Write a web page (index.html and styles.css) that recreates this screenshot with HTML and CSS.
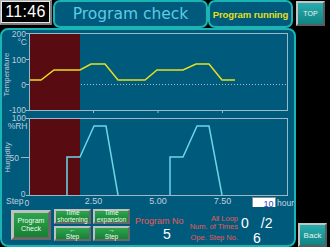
FILE: index.html
```html
<!DOCTYPE html>
<html>
<head>
<meta charset="utf-8">
<link rel="stylesheet" href="styles.css">
</head>
<body>
<div class="screen">
  <div class="top">
    <div class="clock"><div class="clock-face">11:46</div></div>
    <div class="title">Program check</div>
    <div class="status">Program running</div>
    <div class="tbtn top-btn">TOP</div>
  </div>
  <div class="main">
    <div class="panel">
      <svg class="chart" width="292" height="177" viewBox="2 30 292 177">
        <rect class="band" x="30" y="34" width="50" height="76"/>
        <rect class="band" x="30" y="119" width="50" height="76"/>
        <rect class="frame" x="29.5" y="33.5" width="258" height="77"/>
        <rect class="frame" x="29.5" y="118.5" width="258" height="77"/>
        <path class="tick" d="M26 33.5H29M26 59.5H29M26 84.5H29M26 110.5H29M26 118.5H29M21 157.5H29M26 195.5H29M93.5 111V113M158 111V113M222.5 111V113"/>
        <line class="dots" x1="81" y1="84.5" x2="287" y2="84.5"/>
        <polyline class="temp" points="30,80 41,80 54,70 80,70 91,64 105,64 118,80 145,80 157,70 183,70 196,64 209,64 222,80 235,80"/>
        <polyline class="hum" points="67,195 67,157 80,157 94,126 106,126 118,195"/>
        <polyline class="hum" points="170,195 170,157 183,157 197,126 209,126 222,195"/>
        <g class="ax">
          <text x="26" y="37">200</text>
          <text x="27" y="44.5">°C</text>
          <text x="26" y="62.5">100</text>
          <text x="26" y="87.5">0</text>
          <text x="26" y="113">-100</text>
          <text x="26" y="121">100</text>
          <text x="27.5" y="129">%RH</text>
          <text x="19" y="160.5">50</text>
          <text x="25.5" y="196.5">0</text>
        </g>
        <text class="vlabel" transform="translate(9,74.5) rotate(-90)">Temperature</text>
        <text class="vlabel" transform="translate(10,157.5) rotate(-90)">Humidity</text>
        <g class="xl">
          <text x="93.5" y="203.5">2.50</text>
          <text x="158" y="203.5">5.00</text>
          <text x="222.5" y="203.5">7.50</text>
        </g>
        <text class="step" x="6" y="204">Step</text>
        <text class="step" x="24.5" y="205.5">0</text>
        <rect class="inbox" x="252.5" y="197.5" width="23" height="11"/>
        <text class="inval" x="273.5" y="206.5">10</text>
        <text class="hour" x="277" y="205.5">hour</text>
      </svg>
      <div class="controls">
        <div class="gbtn big">Program<br>Check</div>
        <div class="grid4">
          <div class="gbtn">Time<br>shortening</div>
          <div class="gbtn">Time<br>expansion</div>
          <div class="gbtn">←<br>Step</div>
          <div class="gbtn">→<br>Step</div>
        </div>
        <div class="progno">
          <div class="lbl pn">Program No</div>
          <div class="val pv">5</div>
        </div>
        <div class="counts">
          <div class="lbl two">All Loop<br>Num. of Times</div>
          <div class="val loops"><span class="v0">0</span><span class="v2">/2</span></div>
          <div class="lbl one">Ope. Step No.</div>
          <div class="val stepno">6</div>
        </div>
      </div>
    </div>
    <div class="side">
      <div class="tbtn back">Back</div>
    </div>
  </div>
</div>
</body>
</html>
```

FILE: styles.css
```css
html, body {
  margin: 0;
  padding: 0;
  background: #000;
}
body {
  font-family: "Liberation Sans", Arial, sans-serif;
}
.screen {
  width: 330px;
  height: 247px;
  overflow: hidden;
  background: #000;
}
.top {
  display: flex;
  height: 28px;
  align-items: flex-start;
}
.clock {
  box-sizing: border-box;
  width: 52px;
  height: 25px;
  border-style: solid;
  border-width: 1px 2px 2px 1px;
  border-color: #b4b4b4 #7c7c7c #7c7c7c #b4b4b4;
  background: #000;
}
.clock-face {
  box-sizing: border-box;
  height: 100%;
  border: 1px solid #e6e6e6;
  color: #fff;
  font-size: 16px;
  line-height: 20px;
  text-align: center;
  letter-spacing: 0.3px;
}
.title, .status {
  box-sizing: border-box;
  height: 28px;
  border: 2px solid #1ab4b4;
  border-radius: 7px;
  background: #005a7c;
  display: flex;
  align-items: center;
  justify-content: center;
  white-space: nowrap;
}
.title {
  margin-left: 1px;
  width: 155px;
  font-family: "DejaVu Sans", sans-serif;
  font-size: 15.5px;
  color: #5ccce4;
}
.status {
  width: 85px;
  font-size: 9.5px;
  font-weight: bold;
  color: #e4e020;
  letter-spacing: -0.1px;
}
.tbtn {
  box-sizing: border-box;
  border-style: solid;
  border-width: 2px;
  border-color: #c4c4c4 #5c5c5c #5c5c5c #c4c4c4;
  background: linear-gradient(#2aacac, #0f8484);
  color: #e8f4f4;
  display: flex;
  align-items: center;
  justify-content: center;
}
.top-btn {
  margin-left: 3px;
  margin-top: 1px;
  width: 29px;
  height: 25px;
  font-size: 7px;
}
.main {
  display: flex;
  height: 219px;
}
.panel {
  box-sizing: border-box;
  width: 296px;
  height: 219px;
  border: 2px solid #1ab4b4;
  border-radius: 8px;
  background: #005a7c;
  display: flex;
  flex-direction: column;
  overflow: hidden;
}
.chart {
  display: block;
  flex: none;
}
.band { fill: #580c12; }
.frame { fill: none; stroke: #9cb8c8; stroke-width: 1; }
.tick { fill: none; stroke: #9cb8c8; stroke-width: 1; }
.dots { stroke: #a8c0d0; stroke-width: 1; stroke-dasharray: 1 2; }
.temp { fill: none; stroke: #e6e020; stroke-width: 1.5; }
.hum { fill: none; stroke: #6cd6e6; stroke-width: 1.5; }
.ax text {
  font-family: "Liberation Sans", Arial, sans-serif;
  font-size: 8.5px;
  fill: #bccbd8;
  text-anchor: end;
}
.vlabel {
  font-family: "Liberation Sans", Arial, sans-serif;
  font-size: 7.8px;
  fill: #bccbd8;
  text-anchor: middle;
}
.xl text {
  font-family: "Liberation Sans", Arial, sans-serif;
  font-size: 9px;
  fill: #c0d0dc;
  text-anchor: middle;
}
.step {
  font-family: "Liberation Sans", Arial, sans-serif;
  font-size: 8.5px;
  fill: #c0d0dc;
}
.inbox { fill: #fff; stroke: #8c8c8c; stroke-width: 1; }
.inval {
  font-family: "Liberation Sans", Arial, sans-serif;
  font-size: 9px;
  fill: #2a48c0;
  text-anchor: end;
}
.hour {
  font-family: "Liberation Sans", Arial, sans-serif;
  font-size: 8.5px;
  fill: #c8d8e0;
}
.controls {
  display: flex;
  align-items: flex-start;
  height: 38px;
}
.gbtn {
  box-sizing: border-box;
  border-style: solid;
  border-width: 2px;
  border-color: #c0c0c0 #686868 #686868 #c0c0c0;
  background: linear-gradient(#2ea44e, #178034);
  color: #f0fff0;
  font-size: 6.5px;
  line-height: 6.5px;
  text-align: center;
  display: flex;
  align-items: center;
  justify-content: center;
}
.big {
  margin-left: 9px;
  margin-top: 3px;
  width: 40px;
  height: 30px;
  border-width: 3px;
  font-size: 7px;
  line-height: 8px;
}
.grid4 {
  margin-left: 3px;
  margin-top: 2px;
  display: grid;
  grid-template-columns: 37px 37px;
  grid-template-rows: 15px 15px;
  gap: 2px;
}
.lbl {
  color: #e45a5a;
}
.val {
  color: #fff;
  font-size: 14px;
  line-height: 14px;
}
.progno {
  width: 53px;
  margin-left: 5px;
  margin-top: 9px;
  display: flex;
  flex-direction: column;
}
.pn {
  font-size: 9px;
  line-height: 10px;
}
.pv {
  margin-top: 1px;
  padding-left: 28px;
}
.counts {
  margin-top: 8px;
  display: grid;
  grid-template-columns: 50px 52px;
  grid-template-rows: 16px 14px;
}
.two {
  font-size: 7.5px;
  line-height: 8px;
  text-align: right;
}
.one {
  font-size: 7.5px;
  line-height: 14px;
  text-align: right;
}
.loops {
  line-height: 16px;
  display: flex;
}
.v0 { margin-left: 3px; }
.v2 { margin-left: 12px; }
.stepno {
  padding-left: 15px;
}
.side {
  display: flex;
  align-items: flex-start;
}
.back {
  margin-left: 2px;
  margin-top: 195px;
  width: 29px;
  height: 24px;
  font-size: 8px;
}
```
